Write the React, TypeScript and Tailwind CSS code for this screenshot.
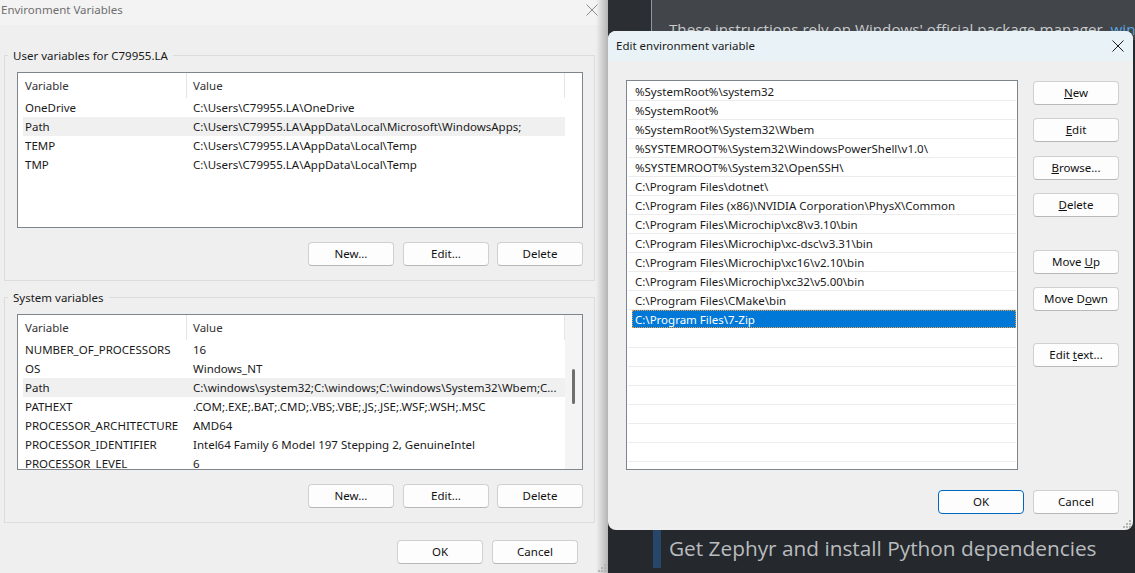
import React from 'react';

const font = "font-['Noto_Sans','Open_Sans',sans-serif]";

const pathRows = [
  '%SystemRoot%\\system32',
  '%SystemRoot%',
  '%SystemRoot%\\System32\\Wbem',
  '%SYSTEMROOT%\\System32\\WindowsPowerShell\\v1.0\\',
  '%SYSTEMROOT%\\System32\\OpenSSH\\',
  'C:\\Program Files\\dotnet\\',
  'C:\\Program Files (x86)\\NVIDIA Corporation\\PhysX\\Common',
  'C:\\Program Files\\Microchip\\xc8\\v3.10\\bin',
  'C:\\Program Files\\Microchip\\xc-dsc\\v3.31\\bin',
  'C:\\Program Files\\Microchip\\xc16\\v2.10\\bin',
  'C:\\Program Files\\Microchip\\xc32\\v5.00\\bin',
  'C:\\Program Files\\CMake\\bin',
  'C:\\Program Files\\7-Zip',
  '', '', '', '', '', '', '', '',
];

const userVars = [
  ['OneDrive', 'C:\\Users\\C79955.LA\\OneDrive'],
  ['Path', 'C:\\Users\\C79955.LA\\AppData\\Local\\Microsoft\\WindowsApps;'],
  ['TEMP', 'C:\\Users\\C79955.LA\\AppData\\Local\\Temp'],
  ['TMP', 'C:\\Users\\C79955.LA\\AppData\\Local\\Temp'],
];

const systemVars = [
  ['NUMBER_OF_PROCESSORS', '16'],
  ['OS', 'Windows_NT'],
  ['Path', 'C:\\windows\\system32;C:\\windows;C:\\windows\\System32\\Wbem;C...'],
  ['PATHEXT', '.COM;.EXE;.BAT;.CMD;.VBS;.VBE;.JS;.JSE;.WSF;.WSH;.MSC'],
  ['PROCESSOR_ARCHITECTURE', 'AMD64'],
  ['PROCESSOR_IDENTIFIER', 'Intel64 Family 6 Model 197 Stepping 2, GenuineIntel'],
  ['PROCESSOR_LEVEL', '6'],
];

const Btn = ({ children, className = '', primary }: { children: React.ReactNode; className?: string; primary?: boolean }) => (
  <button
    className={`h-[24px] w-[86px] shrink-0 rounded-[4px] border bg-[#fdfdfd] text-[11.5px] leading-none text-[#111] ${
      primary ? 'border-[#0067c0]' : 'border-[#d0d0d0] border-b-[#b8b8b8]'
    } ${className}`}
  >
    {children}
  </button>
);

const VarList = ({ rows, active, scroll }: { rows: string[][]; active: string; scroll?: boolean }) => (
  <div className="relative mt-[8px] flex h-[156px] overflow-hidden border border-[#7f858c] bg-white">
    <div className="flex w-[547px] shrink-0 flex-col pl-[5px]">
      <div className="flex h-[25px] shrink-0 items-center text-[#333]">
        <span className="h-full w-[164px] shrink-0 border-r border-[#e5e5e5] pl-[2px] leading-[25px]">Variable</span>
        <span className="h-full flex-1 border-r border-[#e5e5e5] pl-[6px] leading-[25px]">Value</span>
      </div>
      {rows.map(([name, value]) => (
        <div key={name} className={`flex h-[19px] shrink-0 items-center ${name === active ? 'bg-[#f0f0f0]' : ''}`}>
          <span className="w-[164px] shrink-0 overflow-hidden pl-[2px] leading-[20px] whitespace-nowrap">{name}</span>
          <span className="flex-1 pl-[6px] leading-[20px] whitespace-nowrap">{value}</span>
        </div>
      ))}
    </div>
    {scroll && (
      <div className="flex flex-1 justify-center bg-[#f4f4f4] pt-[54px]">
        <div className="h-[35px] w-[3px] rounded-full bg-[#6f6f6f]" />
      </div>
    )}
  </div>
);

const Group = ({ title, children }: { title: string; children: React.ReactNode }) => (
  <fieldset className="w-[591px] border border-[#dcdcdc] pr-[11px] pl-[12px]">
    <legend className="-ml-[9px] px-[5px] leading-[17px] text-[#1a1a1a]">{title}</legend>
    {children}
  </fieldset>
);

const GroupButtons = () => (
  <div className="mt-[14px] mb-[14px] flex justify-end gap-[9px]">
    <Btn>New...</Btn>
    <Btn className="-mr-px">Edit...</Btn>
    <Btn>Delete</Btn>
  </div>
);

const CloseIcon = ({ color }: { color: string }) => (
  <svg width="12" height="12" viewBox="0 0 12 12" fill="none" stroke={color} strokeWidth="1">
    <path d="M0.5 0.5 11.5 11.5M11.5 0.5 0.5 11.5" />
  </svg>
);

const Grip = () => (
  <svg width="10" height="10" viewBox="0 0 10 10" fill="#b5b5b5">
    <rect x="7" y="1" width="2" height="2" />
    <rect x="4" y="4" width="2" height="2" />
    <rect x="7" y="4" width="2" height="2" />
    <rect x="1" y="7" width="2" height="2" />
    <rect x="4" y="7" width="2" height="2" />
    <rect x="7" y="7" width="2" height="2" />
  </svg>
);

const App = () => {
  return (
    <div className={`relative h-[573px] w-[1135px] overflow-hidden bg-[#25282c] text-[11.5px] text-[#1a1a1a] ${font}`}>
      {/* Docs page behind the dialogs */}
      <div className="ml-[608px] flex h-full flex-col">
        <div className="flex h-[40px] shrink-0">
          <div className="w-[43px] bg-[#2b2e32]" />
          <div className="flex-1 overflow-hidden border-l border-[#8a9aa5] bg-[#42454a] pt-[17px] pl-[17px] font-['Open_Sans',sans-serif] text-[15.2px] leading-[24px] whitespace-nowrap text-[#c8cacc]">
            These instructions rely on Windows' official package manager, <span className="text-[#5aa5e0]">win</span>
          </div>
        </div>
        <div className="mt-auto mb-[5px] ml-[45px] flex h-[38px] items-center border-l-[8px] border-[#26466a] pl-[8px] font-['Open_Sans',sans-serif] text-[20.8px] whitespace-nowrap text-[#b9bcbf]">
          Get Zephyr and install Python dependencies
        </div>
      </div>

      {/* Environment Variables window */}
      <div className="absolute top-0 left-0 flex h-[573px] w-[608px] flex-col bg-[#efefef]">
        <div className="flex h-[25px] shrink-0 items-center justify-between bg-[#f3f3f3] pr-[10px] pb-[6px] pl-px text-[#6f6f6f]">
          <span>Environment Variables</span>
          <CloseIcon color="#8c8c8c" />
        </div>
        <div className="flex flex-col pt-[22px] pl-[4px]">
          <Group title="User variables for C79955.LA">
            <VarList rows={userVars} active="Path" />
            <GroupButtons />
          </Group>
          <div className="h-[8px]" />
          <Group title="System variables">
            <VarList rows={systemVars} active="Path" scroll />
            <GroupButtons />
          </Group>
          <div className="mt-[17px] flex justify-end gap-[9px] pr-[30px]">
            <Btn>OK</Btn>
            <Btn>Cancel</Btn>
          </div>
        </div>
        {/* shadow of the dialog on top */}
        <div className="pointer-events-none absolute top-0 right-0 bottom-0 w-[12px] bg-gradient-to-r from-transparent to-[#b4b4b4]" />
        <div className="absolute right-[1px] bottom-0">
          <Grip />
        </div>
      </div>

      {/* Edit environment variable dialog */}
      <div className="absolute top-[31px] left-[608px] flex h-[499px] w-[525px] flex-col overflow-hidden rounded-[8px] bg-[#efefef]">
        <div className="flex h-[30px] shrink-0 items-center justify-between bg-[#e9f3f7] pr-[9px] pl-[8px] text-[#1a1a1a]">
          <span>Edit environment variable</span>
          <CloseIcon color="#1a1a1a" />
        </div>
        <div className="flex pt-[19px] pl-[18px]">
          <div className="h-[390px] w-[392px] shrink-0 overflow-hidden border border-[#7f858c] bg-white pt-[1px] pl-[1px]">
            {pathRows.map((row, i) =>
              i === 12 ? (
                <div key={i} className="mb-px ml-[4px] h-[18px] w-[384px] border border-dotted border-[#f0a040] bg-[#0078d7] pl-[2px] leading-[18px] text-white">
                  {row}
                </div>
              ) : (
                <div key={i} className="h-[19px] w-[388px] border-b border-[#ececec] pl-[7px] leading-[20px]">
                  {row}
                </div>
              )
            )}
          </div>
          <div className="ml-[15px] flex flex-col pt-[1px]">
            <Btn><u>N</u>ew</Btn>
            <Btn className="mt-[13px]"><u>E</u>dit</Btn>
            <Btn className="mt-[14px]"><u>B</u>rowse...</Btn>
            <Btn className="mt-[13px]"><u>D</u>elete</Btn>
            <Btn className="mt-[33px]">Move <u>U</u>p</Btn>
            <Btn className="mt-[13px]">Move D<u>o</u>wn</Btn>
            <Btn className="mt-[32px]">Edit <u>t</u>ext...</Btn>
          </div>
        </div>
        <div className="mt-[20px] flex justify-end gap-[9px] pr-[14px]">
          <Btn primary>OK</Btn>
          <Btn>Cancel</Btn>
        </div>
        <div className="absolute right-[1px] bottom-[1px]">
          <Grip />
        </div>
      </div>
    </div>
  );
};

export default App;
